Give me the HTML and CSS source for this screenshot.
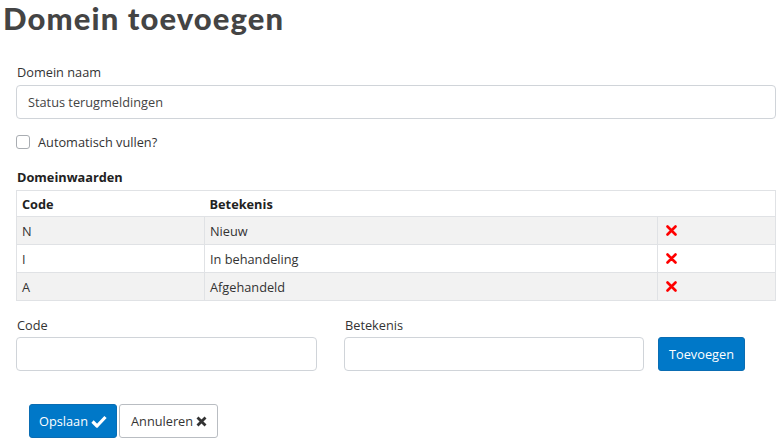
FILE: index.html
```html
<!DOCTYPE html>
<html lang="nl">
<head>
<meta charset="utf-8">
<title>Domein toevoegen</title>
<link rel="stylesheet" href="styles.css">
</head>
<body>
<h1 class="title">Domein toevoegen</h1>
<div class="form">
  <div class="field">
    <label class="label">Domein naam</label>
    <div class="input">Status terugmeldingen</div>
  </div>
  <div class="check-row">
    <span class="checkbox"></span>
    <span>Automatisch vullen?</span>
  </div>
  <div class="section-title">Domeinwaarden</div>
  <table class="grid">
    <thead>
      <tr><th class="c-code">Code</th><th class="c-bet">Betekenis</th><th class="c-del"></th></tr>
    </thead>
    <tbody>
      <tr class="odd"><td>N</td><td>Nieuw</td><td class="del"><svg width="11" height="11" viewBox="0 0 11 11"><path d="M1.5 1.5 L9.5 9.5 M9.5 1.5 L1.5 9.5" stroke="#f00" stroke-width="2.6" stroke-linecap="round"/></svg></td></tr>
      <tr><td>I</td><td>In behandeling</td><td class="del"><svg width="11" height="11" viewBox="0 0 11 11"><path d="M1.5 1.5 L9.5 9.5 M9.5 1.5 L1.5 9.5" stroke="#f00" stroke-width="2.6" stroke-linecap="round"/></svg></td></tr>
      <tr class="odd"><td>A</td><td>Afgehandeld</td><td class="del"><svg width="11" height="11" viewBox="0 0 11 11"><path d="M1.5 1.5 L9.5 9.5 M9.5 1.5 L1.5 9.5" stroke="#f00" stroke-width="2.6" stroke-linecap="round"/></svg></td></tr>
    </tbody>
  </table>
  <div class="add-row">
    <div class="add-field">
      <label class="label">Code</label>
      <div class="input"></div>
    </div>
    <div class="add-field">
      <label class="label">Betekenis</label>
      <div class="input"></div>
    </div>
    <button class="btn btn-primary btn-add">Toevoegen</button>
  </div>
  <div class="actions">
    <button class="btn btn-primary btn-save">Opslaan <svg width="16" height="13" viewBox="0 0 16 13"><path d="M1.5 6.5 L6 11 L14.5 2" fill="none" stroke="#fff" stroke-width="3.2" stroke-linejoin="round"/></svg></button>
    <button class="btn btn-default">Annuleren <svg width="11" height="11" viewBox="0 0 11 11"><path d="M1.5 1.5 L9.5 9.5 M9.5 1.5 L1.5 9.5" stroke="#333" stroke-width="2.8"/></svg></button>
  </div>
</div>
</body>
</html>
```
FILE: styles.css
```css
* { box-sizing: border-box; }
body {
  margin: 0;
  font-family: "Open Sans", "Noto Sans", sans-serif;
  font-size: 12.75px;
  color: #333;
  background: #fff;
}
.title {
  margin: 0;
  padding: 0 0 0 3px;
  font-family: Lato, "DejaVu Sans", sans-serif;
  font-weight: 900;
  font-size: 31px;
  letter-spacing: 1.1px;
  line-height: 36px;
  color: #444;
}
.form {
  padding: 28px 8px 0 16px;
}
.label {
  display: block;
  padding-left: 1px;
  line-height: 16px;
  margin-bottom: 5px;
}
.input {
  height: 34px;
  border: 1px solid #d0d4d9;
  border-radius: 4px;
  padding: 0 11px;
  line-height: 32px;
  color: #444;
  background: #fff;
}
.check-row {
  display: flex;
  align-items: center;
  gap: 8px;
  margin-top: 15px;
  height: 16px;
}
.checkbox {
  width: 14px;
  height: 14px;
  border: 1px solid #a9adb2;
  border-radius: 3px;
  background: #fff;
}
.section-title {
  margin-top: 19px;
  font-weight: 700;
  line-height: 16px;
  padding-left: 1px;
  color: #222;
}
.grid {
  margin-top: 5px;
  width: 760px;
  border-collapse: collapse;
  border: 1px solid #e0e2e5;
}
.grid th, .grid td {
  text-align: left;
  padding: 0 5px;
  border-top: 1px solid #e0e2e5;
}
.grid th {
  height: 26px;
  font-weight: 700;
  color: #222;
}
.grid td {
  height: 28px;
  border-left: 1px solid #e0e2e5;
}
.grid td:first-child { border-left: none; }
.grid tr.odd td { background: #f2f2f2; }
.c-code { width: 188px; }
.c-bet { width: 453px; }
.grid td.del { padding-left: 8px; }
.del svg { display: block; }
.add-row {
  display: flex;
  align-items: flex-end;
  margin-top: 16px;
}
.add-row .label { margin-bottom: 4px; }
.add-field { width: 301px; margin-right: 27px; }
.add-field + .add-field { margin-right: 14px; width: 300px; }
.btn {
  font-family: inherit;
  font-size: 12.75px;
  height: 34px;
  border-radius: 3px;
  cursor: pointer;
  display: inline-flex;
  align-items: center;
  gap: 3px;
}
.btn-primary {
  background: #0078c8;
  border: 1px solid #0a6db3;
  color: #fff;
}
.btn-add { padding: 0 10px; }
.actions {
  margin-top: 33px;
  padding-left: 13px;
  display: flex;
  gap: 2px;
}
.actions .btn-save { padding: 0 9px; }
.btn-default {
  background: #fff;
  border: 1px solid #b9bdc2;
  color: #333;
  padding: 0 10px 0 11px;
}
```
